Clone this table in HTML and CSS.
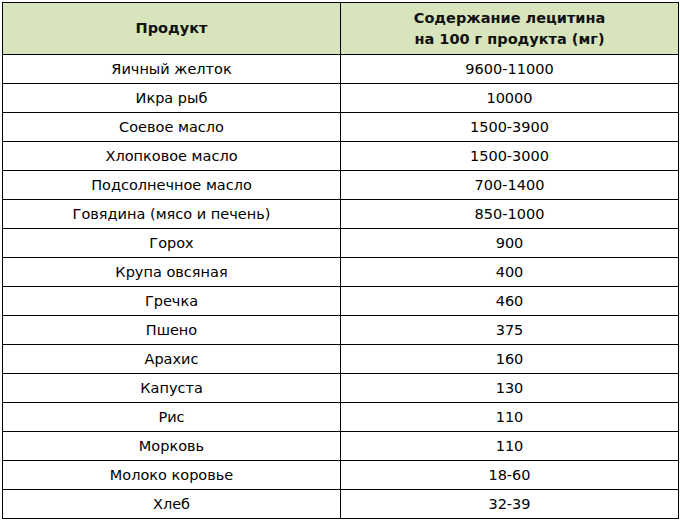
FILE: index.html
```html
<!DOCTYPE html>
<html lang="ru">
<head>
<meta charset="utf-8">
<title>Лецитин</title>
<link rel="stylesheet" href="styles.css">
</head>
<body>
<table class="lecithin">
  <colgroup><col class="c1"><col class="c2"></colgroup>
  <thead>
    <tr class="head">
      <th>Продукт</th>
      <th>Содержание лецитина<br>на 100 г продукта (мг)</th>
    </tr>
  </thead>
  <tbody>
    <tr><td>Яичный желток</td><td>9600-11000</td></tr>
    <tr><td>Икра рыб</td><td>10000</td></tr>
    <tr><td>Соевое масло</td><td>1500-3900</td></tr>
    <tr><td>Хлопковое масло</td><td>1500-3000</td></tr>
    <tr><td>Подсолнечное масло</td><td>700-1400</td></tr>
    <tr><td>Говядина (мясо и печень)</td><td>850-1000</td></tr>
    <tr><td>Горох</td><td>900</td></tr>
    <tr><td>Крупа овсяная</td><td>400</td></tr>
    <tr><td>Гречка</td><td>460</td></tr>
    <tr><td>Пшено</td><td>375</td></tr>
    <tr><td>Арахис</td><td>160</td></tr>
    <tr><td>Капуста</td><td>130</td></tr>
    <tr><td>Рис</td><td>110</td></tr>
    <tr><td>Морковь</td><td>110</td></tr>
    <tr><td>Молоко коровье</td><td>18-60</td></tr>
    <tr><td>Хлеб</td><td>32-39</td></tr>
  </tbody>
</table>
</body>
</html>
```
FILE: styles.css
```css
html, body {
  margin: 0;
  padding: 0;
  background: #ffffff;
}
body {
  padding: 2px;
  font-family: "DejaVu Sans", Verdana, sans-serif;
  font-size: 14.5px;
  color: #000000;
}
.lecithin {
  border-collapse: collapse;
  width: 676px;
  table-layout: fixed;
}
.lecithin .c1 { width: 338px; }
.lecithin .c2 { width: 338px; }
.lecithin th,
.lecithin td {
  border: 1px solid #000000;
  padding: 0;
  text-align: center;
  vertical-align: middle;
}
.lecithin th {
  background: #d8e4bc;
  font-weight: bold;
  height: 51px;
  line-height: 21px;
  color: #111111;
}
.lecithin td {
  height: 28px;
  line-height: 17px;
}
```
